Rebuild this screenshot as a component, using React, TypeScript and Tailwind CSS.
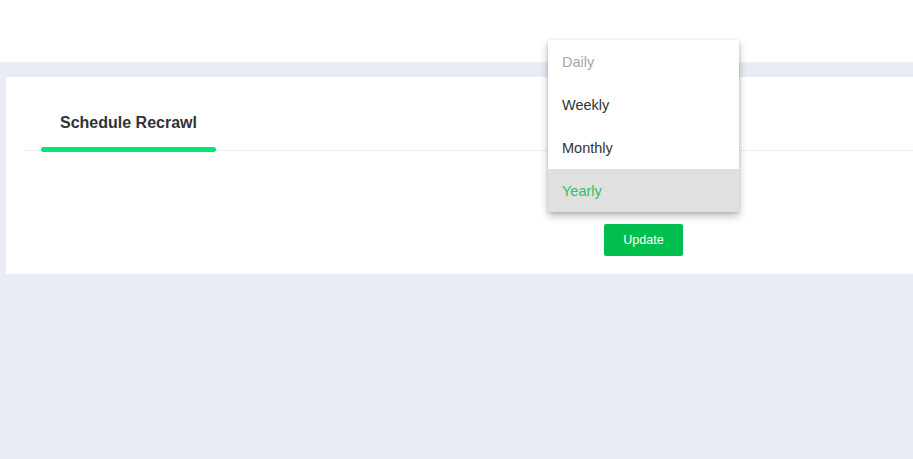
import React from "react";

export default function App() {
  const items = [
    { label: "Daily", cls: "text-[#a8a8a8]" },
    { label: "Weekly", cls: "text-[#333333]" },
    { label: "Monthly", cls: "text-[#333333]" },
    { label: "Yearly", cls: "text-[#27c463] bg-[#e0e0e0]" },
  ];
  return (
    <div
      className="relative w-[913px] h-[459px] overflow-hidden bg-[#e9ecf5]"
      style={{ fontFamily: '"Liberation Sans", Arial, sans-serif' }}
    >
      <div className="h-[62px] bg-white" />
      <div className="pt-[15px] pl-[6px]">
        <div className="bg-white h-[197px] pl-[18px]">
          <div className="pt-[37px] border-b border-[#eceef2]">
            <div className="ml-[17px] w-[175px]">
              <div className="pl-[19px] text-[16px] font-bold text-[#333333] leading-[18px]">
                Schedule Recrawl
              </div>
              <div className="mt-[15px] mb-[-2px] h-[5px] rounded-full bg-[#00e676]" />
            </div>
          </div>
          <div className="flex pt-[73px] pl-[580px]">
            <button className="w-[79px] h-[32px] rounded-[2px] bg-[#00bf4e] text-white text-[12.5px]">
              Update
            </button>
          </div>
        </div>
      </div>
      <div className="absolute left-[548px] top-[40px] w-[191px] bg-white shadow-[0_4px_8px_rgba(0,0,0,0.25),0_1px_3px_rgba(0,0,0,0.15)]">
        {items.map((it) => (
          <div
            key={it.label}
            className={`h-[43px] flex items-center pl-[14px] pt-[2px] text-[14.5px] ${it.cls}`}
          >
            {it.label}
          </div>
        ))}
      </div>
    </div>
  );
}
